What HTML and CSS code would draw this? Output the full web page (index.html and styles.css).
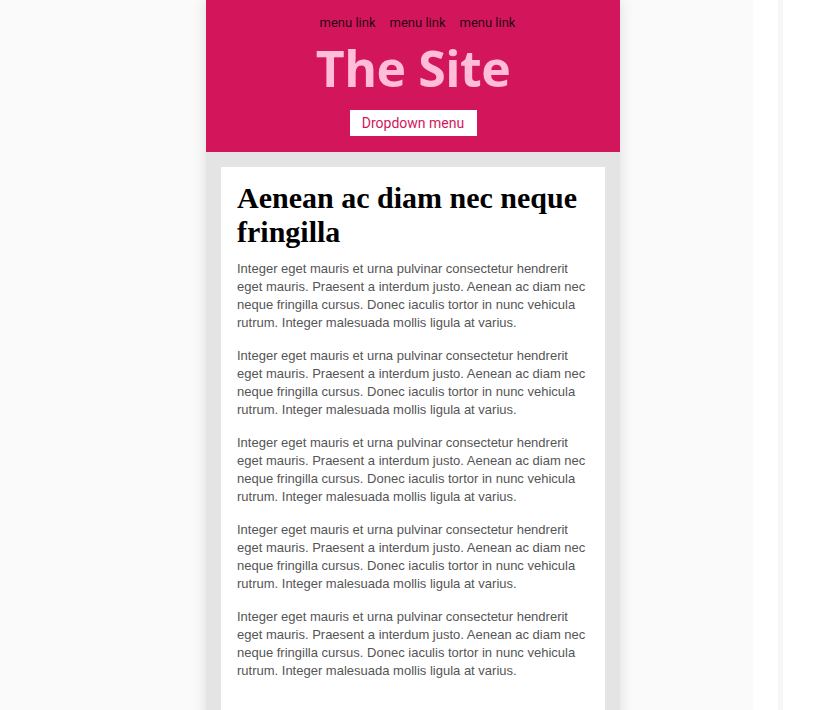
FILE: index.html
```html
<!DOCTYPE html>
<html lang="en">
<head>
<meta charset="utf-8">
<title>The Site</title>
<link rel="stylesheet" href="styles.css">
</head>
<body>
<div class="stage">
  <div class="canvas">
    <div class="phone">
      <header class="site-header">
        <nav class="menu">
          <a href="#">menu link</a>
          <a href="#">menu link</a>
          <a href="#">menu link</a>
        </nav>
        <h1 class="site-title">The Site</h1>
        <button class="dropdown">Dropdown menu</button>
      </header>
      <main class="content">
        <article class="card">
          <h2>Aenean ac diam nec neque fringilla</h2>
          <p>Integer eget mauris et urna pulvinar consectetur hendrerit eget mauris. Praesent a interdum justo. Aenean ac diam nec neque fringilla cursus. Donec iaculis tortor in nunc vehicula rutrum. Integer malesuada mollis ligula at varius.</p>
          <p>Integer eget mauris et urna pulvinar consectetur hendrerit eget mauris. Praesent a interdum justo. Aenean ac diam nec neque fringilla cursus. Donec iaculis tortor in nunc vehicula rutrum. Integer malesuada mollis ligula at varius.</p>
          <p>Integer eget mauris et urna pulvinar consectetur hendrerit eget mauris. Praesent a interdum justo. Aenean ac diam nec neque fringilla cursus. Donec iaculis tortor in nunc vehicula rutrum. Integer malesuada mollis ligula at varius.</p>
          <p>Integer eget mauris et urna pulvinar consectetur hendrerit eget mauris. Praesent a interdum justo. Aenean ac diam nec neque fringilla cursus. Donec iaculis tortor in nunc vehicula rutrum. Integer malesuada mollis ligula at varius.</p>
          <p>Integer eget mauris et urna pulvinar consectetur hendrerit eget mauris. Praesent a interdum justo. Aenean ac diam nec neque fringilla cursus. Donec iaculis tortor in nunc vehicula rutrum. Integer malesuada mollis ligula at varius.</p>
        </article>
      </main>
    </div>
  </div>
  <div class="gutter"></div>
  <div class="divider"></div>
  <div class="rest"></div>
</div>
</body>
</html>
```

FILE: styles.css
```css
html, body {
  margin: 0;
  padding: 0;
  height: 100%;
  overflow: hidden;
}
body {
  background: #ffffff;
}
.stage {
  display: flex;
  height: 710px;
}
.canvas {
  width: 753px;
  flex: none;
  background: #fafafa;
  padding-left: 206px;
  box-sizing: border-box;
  overflow: hidden;
}
.gutter {
  width: 25px;
  flex: none;
  background: #ffffff;
}
.divider {
  width: 5px;
  flex: none;
  background: #f7f7f7;
}
.rest {
  flex: 1;
  background: #ffffff;
}
.phone {
  width: 414px;
  height: 760px;
  background: #e4e4e4;
  box-shadow: 0 0 14px rgba(0, 0, 0, 0.12);
}
.site-header {
  background: #d3165b;
  height: 152px;
  box-sizing: border-box;
  padding-top: 15px;
  display: flex;
  flex-direction: column;
  align-items: center;
}
.menu {
  display: flex;
  gap: 14px;
  padding-left: 9px;
  font-family: Roboto, "Liberation Sans", sans-serif;
  font-size: 13px;
  line-height: 16px;
}
.menu a {
  color: rgba(0, 0, 0, 0.85);
  text-decoration: none;
}
.site-title {
  margin: 7px 0 0;
  font-family: "Open Sans", "Liberation Sans", sans-serif;
  font-weight: 700;
  font-size: 50px;
  line-height: 60px;
  color: #ffbdd9;
  letter-spacing: -0.5px;
}
.dropdown {
  margin-top: 12px;
  border: 0;
  background: #ffffff;
  color: #d3165b;
  font-family: Roboto, "Liberation Sans", sans-serif;
  font-size: 14px;
  height: 26px;
  width: 127px;
  padding: 0;
  cursor: pointer;
}
.content {
  padding: 15px 15px 0;
}
.card {
  background: #ffffff;
  padding: 14px 16px 20px;
  min-height: 600px;
}
.card h2 {
  margin: 0 0 11px;
  font-family: "Liberation Serif", "Times New Roman", serif;
  font-weight: 700;
  font-size: 30px;
  line-height: 34px;
  color: #000000;
}
.card p {
  margin: 0 0 15px;
  font-family: "Liberation Sans", Arial, sans-serif;
  font-size: 13px;
  line-height: 18px;
  color: #555555;
}
```
